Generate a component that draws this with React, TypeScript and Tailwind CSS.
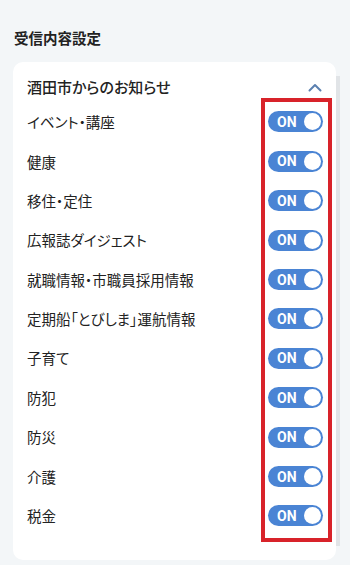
import React from "react";

const items = [
  "イベント・講座",
  "健康",
  "移住・定住",
  "広報誌ダイジェスト",
  "就職情報・市職員採用情報",
  "定期船「とびしま」運航情報",
  "子育て",
  "防犯",
  "防災",
  "介護",
  "税金",
];

function Toggle() {
  return (
    <div className="flex h-[21px] w-[55px] items-center justify-between rounded-full bg-[#4a84d4] pl-[9px] pr-[2px]">
      <span
        className="text-[14px] font-bold leading-none text-white"
        style={{ fontFamily: "Roboto, 'Liberation Sans', sans-serif" }}
      >
        ON
      </span>
      <span className="h-[17px] w-[17px] rounded-full bg-white" />
    </div>
  );
}

export default function App() {
  return (
    <div
      className="min-h-[565px] w-[350px] bg-[#f3f6f8] pt-[29px] [font-feature-settings:'palt']"
      style={{ fontFamily: "'Noto Sans CJK JP', 'Noto Sans', sans-serif" }}
    >
      <h1 className="ml-[14px] text-[14.5px] font-bold leading-[18px] text-[#222]">
        受信内容設定
      </h1>
      <div className="relative ml-[13px] mt-[15px] w-[323px] rounded-[10px] bg-white pb-[24px] pl-[14px] pr-[13px] pt-[11px] shadow-[18px_0_0_-14px_#e1e4e7]">
        <div className="flex h-[29.3px] items-center justify-between">
          <span className="text-[15px] font-medium text-[#222]">
            酒田市からのお知らせ
          </span>
          <svg width="14" height="9" viewBox="0 0 14 9" className="mr-[1px]">
            <path
              d="M1.5 7.5 L7 2 L12.5 7.5"
              fill="none"
              stroke="#5b80b0"
              strokeWidth="2"
              strokeLinecap="round"
              strokeLinejoin="round"
            />
          </svg>
        </div>
        <div className="flex flex-col">
          {items.map((t) => (
            <div key={t} className="flex h-[39.4px] items-center justify-between">
              <span className="text-[14.5px] text-[#222]">{t}</span>
              <Toggle />
            </div>
          ))}
        </div>
        <div className="pointer-events-none absolute left-[248px] top-[36px] h-[444px] w-[71px] border-[4px] border-[#d8232a]" />
      </div>
    </div>
  );
}
